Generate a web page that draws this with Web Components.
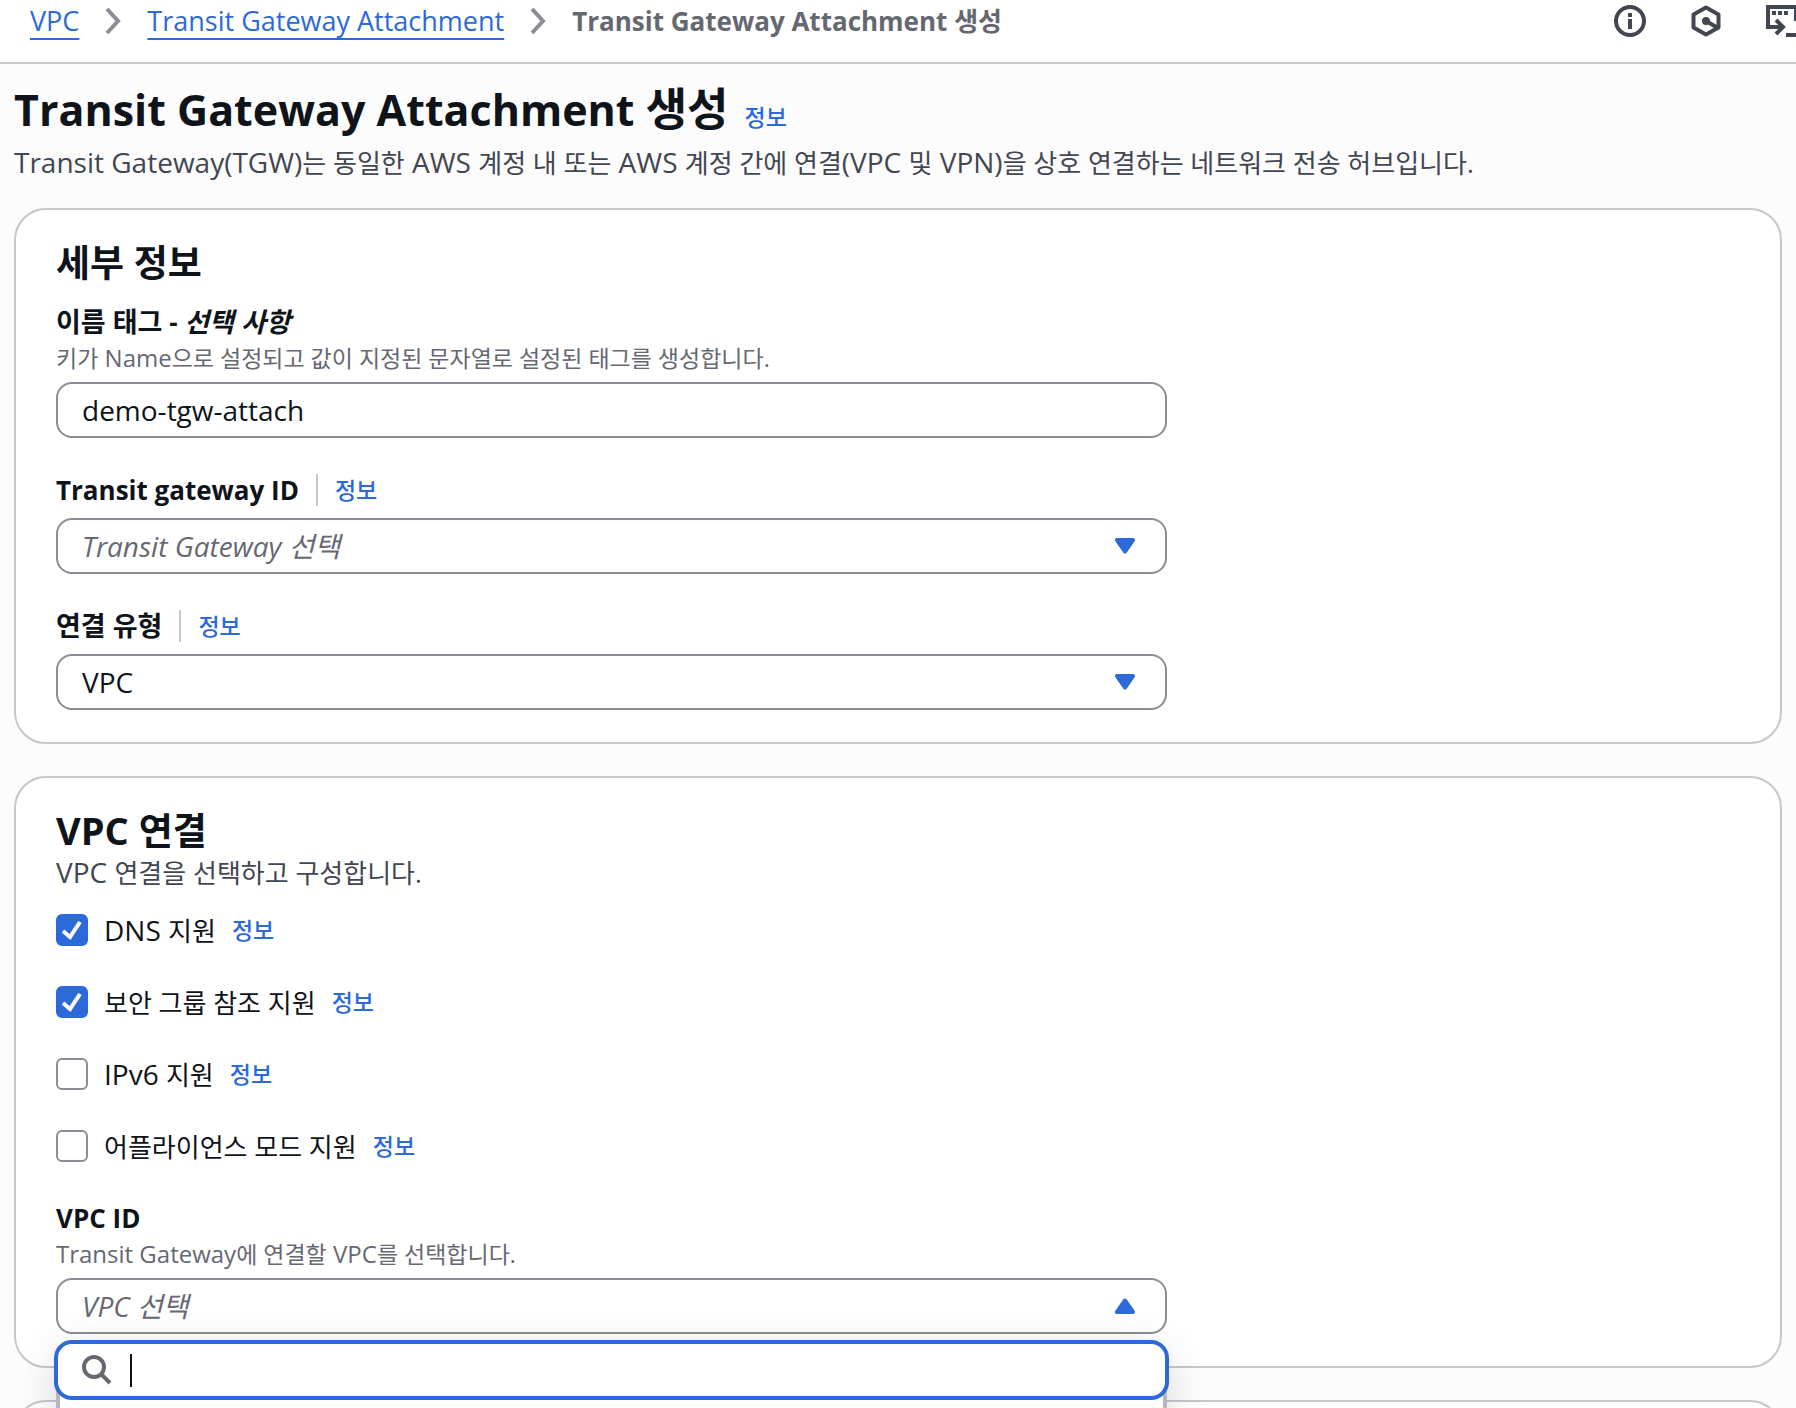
<!DOCTYPE html>
<html lang="ko">
<head>
<meta charset="utf-8">
<title>Transit Gateway Attachment 생성</title>
<style>
  html, body { margin: 0; height: 100%; }
  body {
    font-family: "Open Sans", "Noto Sans CJK KR", sans-serif;
    font-size: 28px;
    color: #0f141a;
    background: #fcfcfd;
    --link: #2c69d9;
    --muted: #656871;
    --body: #424650;
    --line: #c6c6cd;
    --control: #8c8c94;
  }
</style>
</head>
<body>
<console-page></console-page>
<script>
  const ko = (text) => text.replace(/[가-힣](?:[가-힣 .]*[가-힣.])?/g, '<span class="ko">$&</span>');

  const base = `
    *, *::before { box-sizing: border-box; }
    h1, h2, p { margin: 0; }
    .ko { font-size: 26px; line-height: 1; }
    a { color: var(--link); }
  `;

  const define = (name, render) => customElements.define(name, class extends HTMLElement {
    connectedCallback() {
      if (this.shadowRoot) return;
      this.attachShadow({ mode: 'open' }).innerHTML = render(this);
    }
  });

  define('info-link', () => `
    <style>${base}
      :host { display: inline-block; }
      a { display: block; font-size: 23px; line-height: 32px; font-weight: 500; text-decoration: none; }
    </style>
    <a href="#info">정보</a>`);

  define('bread-crumbs', () => `
    <style>${base}
      :host { display: block; }
      ol { display: flex; align-items: center; gap: 26px; margin: 0; padding: 0; list-style: none; font-size: 27px; line-height: 42px; white-space: nowrap; }
      li { display: flex; align-items: center; gap: 26px; }
      a { text-decoration-thickness: 2px; text-underline-offset: 7px; text-decoration-skip-ink: none; }
      .current { display: block; color: var(--muted); font-size: 26px; font-weight: 700; }
      svg { display: block; }
    </style>
    <nav aria-label="탐색 경로"><ol>
      <li><a href="#vpc">VPC</a><svg width="16" height="28" viewBox="0 0 16 28" fill="none" stroke="#8c8c94" stroke-width="4"><path d="M2 2l11 12L2 26"/></svg></li>
      <li><a href="#tgw">Transit Gateway Attachment</a><svg width="16" height="28" viewBox="0 0 16 28" fill="none" stroke="#8c8c94" stroke-width="4"><path d="M2 2l11 12L2 26"/></svg></li>
      <li><span class="current" aria-current="page">${ko('Transit Gateway Attachment 생성')}</span></li>
    </ol></nav>`);

  define('top-bar', () => `
    <style>${base}
      :host { display: flex; justify-content: space-between; align-items: flex-start; flex: none; height: 64px; padding-left: 30px; box-sizing: border-box; background: #fff; border-bottom: 2px solid var(--line); overflow: hidden; }
      .tools { display: flex; gap: 44px; padding-top: 5px; margin-right: -2px; }
      button { display: block; width: 32px; height: 32px; padding: 0; border: 0; background: none; color: var(--body); }
      svg { display: block; }
    </style>
    <bread-crumbs></bread-crumbs>
    <div class="tools">
      <button type="button" aria-label="정보"><svg width="32" height="32" viewBox="0 0 32 32" fill="none" stroke="currentColor" stroke-width="4"><circle cx="16" cy="16" r="14"/><path d="M16 14v10M16 8v4"/></svg></button>
      <button type="button" aria-label="Amazon Q"><svg width="32" height="32" viewBox="0 0 32 32" fill="none" stroke="currentColor" stroke-width="4" stroke-linejoin="round"><path d="M16 2.500l12.500 7v13L16 29.500l-12.500-7v-13z"/><path d="M16 16l12 7"/><circle cx="16" cy="16" r="4" fill="currentColor" stroke="none"/></svg></button>
      <button type="button" aria-label="CloudShell"><svg width="32" height="32" viewBox="0 0 32 32" fill="none" stroke="currentColor" stroke-width="4"><path d="M30 16V2H2v20h15"/><path d="M10 15l7 7-7 7"/><path d="M20 30h12"/><path d="M6 8h4M12 8h4M18 8h4"/></svg></button>
    </div>`);

  define('page-heading', () => `
    <style>${base}
      :host { display: block; }
      .row { display: flex; align-items: baseline; gap: 16px; }
      h1 { font-size: 43px; line-height: 60px; font-weight: 700; }
      h1 .ko { font-size: 45px; }
      p { line-height: 44px; color: var(--body); }
    </style>
    <div class="row"><h1>${ko('Transit Gateway Attachment 생성')}</h1><info-link></info-link></div>
    <p>${ko('Transit Gateway(TGW)는 동일한 AWS 계정 내 또는 AWS 계정 간에 연결(VPC 및 VPN)을 상호 연결하는 네트워크 전송 허브입니다.')}</p>`);

  define('form-card', (el) => `
    <style>${base}
      :host { display: block; box-sizing: border-box; flex: none; padding: 32px 40px; background: #fff; border: 2px solid var(--line); border-radius: 32px; }
      h2 { font-size: 38px; line-height: 40px; font-weight: 700; }
      h2 .ko { font-size: 37px; }
      p { line-height: 44px; color: var(--body); }
      .body { margin-top: 20px; }
    </style>
    <h2>${ko(el.getAttribute('heading'))}</h2>
    ${el.hasAttribute('description') ? `<p>${ko(el.getAttribute('description'))}</p>` : ''}
    <div class="body"><slot></slot></div>`);

  const arrow = (up) => `<svg class="arrow" width="20" height="16" viewBox="0 0 20 16" aria-hidden="true"><path fill="#2c69d9" stroke="#2c69d9" stroke-width="4" stroke-linejoin="round" d="${up ? 'M2 14h16L10 2.500z' : 'M2 2h16L10 13.500z'}"/></svg>`;

  define('form-field', (el) => {
    const value = el.getAttribute('value') || '';
    const hint = el.getAttribute('placeholder');
    const open = el.hasAttribute('open');
    const control = el.getAttribute('kind') === 'text'
      ? `<input id="control" type="text" value="${value}">`
      : `<select id="control" class="${hint ? 'empty' : ''}"><option>${hint || value}</option></select>${arrow(open)}`;
    return `
    <style>${base}
      :host { display: block; }
      .top { display: flex; align-items: center; gap: 17px; height: 40px; }
      label { font-size: 26px; line-height: 40px; font-weight: 700; }
      label .ko { font-size: 27px; }
      .rule { width: 2px; height: 32px; background: var(--line); }
      p { font-size: 24px; line-height: 32px; color: var(--muted); }
      p .ko { font-size: 23px; }
      .box { position: relative; display: grid; align-items: center; width: 66%; margin-top: 8px; }
      .box > * { grid-area: 1 / 1; }
      input, select { width: 100%; height: 56px; margin: 0; padding: 0 24px; appearance: none; font: inherit; color: inherit; background: #fff; border: 2px solid var(--control); border-radius: 16px; outline: 0; }
      .empty { font-style: italic; color: var(--muted); }
      .arrow { justify-self: end; margin-right: 32px; pointer-events: none; }
    </style>
    <div class="top"><label for="control">${ko(el.getAttribute('label'))}${el.hasAttribute('optional') ? ` - <i>${ko('선택 사항')}</i>` : ''}</label>
      ${el.hasAttribute('info') ? '<span class="rule"></span><info-link></info-link>' : ''}</div>
    ${el.hasAttribute('description') ? `<p>${ko(el.getAttribute('description'))}</p>` : ''}
    <div class="box">${control}<slot></slot></div>`;
  });

  define('filter-dropdown', () => `
    <style>${base}
      :host { position: absolute; z-index: 2; top: calc(100% + 8px); left: 0; right: 0; height: 320px; box-sizing: border-box; background: #fff; border: 4px solid #b6b6be; border-radius: 16px; box-shadow: 0 8px 40px 2px rgba(0, 7, 22, 0.12); }
      .search { display: flex; align-items: center; gap: 18px; height: 60px; margin: -6px; padding: 0 24px; background: #fff; border: 4px solid var(--link); border-radius: 18px; }
      .caret { width: 2px; height: 33px; background: #0f141a; }
      .entry { display: flex; flex: 1; align-items: center; }
      input { flex: 1; min-width: 0; height: 40px; padding: 0; border: 0; outline: 0; font: inherit; background: none; caret-color: transparent; }
      svg { display: block; flex: none; }
    </style>
    <div class="search">
      <svg width="30" height="30" viewBox="0 0 30 30" fill="none" stroke="#656871" stroke-width="4"><circle cx="12" cy="12" r="10"/><path d="M19 19l9 9"/></svg>
      <div class="entry"><span class="caret"></span><input type="text" aria-label="VPC 검색"></div>
    </div>`);

  define('check-option', (el) => `
    <style>${base}
      :host { display: flex; align-items: center; gap: 16px; height: 32px; }
      label { display: flex; align-items: center; gap: 16px; line-height: 32px; }
      input { appearance: none; display: grid; place-items: center; width: 32px; height: 32px; margin: 0; background: #fff; border: 2px solid var(--control); border-radius: 6px; }
      .tick { display: grid; }
      .tick > * { grid-area: 1 / 1; }
      svg { display: none; pointer-events: none; }
      input:checked { background: var(--link); border-color: var(--link); }
      input:checked + svg { display: block; }
    </style>
    <label><span class="tick"><input type="checkbox" ${el.hasAttribute('checked') ? 'checked' : ''}><svg width="32" height="32" viewBox="0 0 32 32" fill="none" stroke="#fff" stroke-width="4"><path d="M7 17l7 6L24 8"/></svg></span><span>${ko(el.getAttribute('label'))}</span></label>
    <info-link></info-link>`);

  define('console-page', () => `
    <style>${base}
      :host { display: flex; flex-direction: column; height: 100vh; overflow: hidden; }
      main { display: flex; flex-direction: column; flex: 1; min-height: 0; padding: 16px 14px 0; overflow: hidden; }
      page-heading { margin-bottom: 24px; }
      form { display: flex; flex-direction: column; gap: 32px; }
      .fields { display: grid; gap: 32px; }
      .options { display: grid; gap: 40px; margin-bottom: 36px; }
    </style>
    <top-bar></top-bar>
    <main>
      <page-heading></page-heading>
      <form>
        <form-card heading="세부 정보">
          <div class="fields">
            <form-field kind="text" label="이름 태그" optional description="키가 Name으로 설정되고 값이 지정된 문자열로 설정된 태그를 생성합니다." value="demo-tgw-attach"></form-field>
            <form-field label="Transit gateway ID" info placeholder="Transit Gateway 선택"></form-field>
            <form-field label="연결 유형" info value="VPC"></form-field>
          </div>
        </form-card>
        <form-card heading="VPC 연결" description="VPC 연결을 선택하고 구성합니다.">
          <div class="options">
            <check-option label="DNS 지원" checked></check-option>
            <check-option label="보안 그룹 참조 지원" checked></check-option>
            <check-option label="IPv6 지원"></check-option>
            <check-option label="어플라이언스 모드 지원"></check-option>
          </div>
          <form-field label="VPC ID" description="Transit Gateway에 연결할 VPC를 선택합니다." placeholder="VPC 선택" open>
            <filter-dropdown></filter-dropdown>
          </form-field>
        </form-card>
        <form-card heading=""></form-card>
      </form>
    </main>`);
</script>
</body>
</html>
